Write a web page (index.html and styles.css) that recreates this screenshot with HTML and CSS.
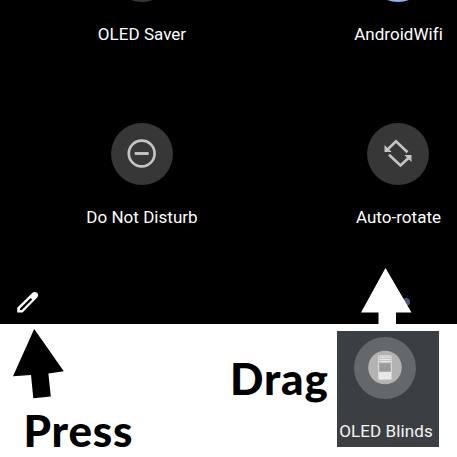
FILE: index.html
```html
<!DOCTYPE html>
<html lang="en">
<head>
<meta charset="utf-8">
<title>Quick settings guide</title>
<link rel="stylesheet" href="styles.css">
</head>
<body>
<main class="page">
  <section class="panel">
    <div class="tiles">
      <div class="tile"><span class="disc"></span><span class="label">OLED Saver</span></div>
      <div class="tile"><span class="disc on"></span><span class="label">AndroidWifi</span></div>
      <div class="tile">
        <span class="disc">
          <svg width="62" height="62" viewBox="0 0 62 62" fill="none" stroke="#c4c4c4"><circle cx="30.7" cy="30.5" r="12.9" stroke-width="2.7"/><path d="M23.7 30.5h14" stroke-width="2.9"/></svg>
        </span>
        <span class="label">Do Not Disturb</span>
      </div>
      <div class="tile">
        <span class="disc">
          <svg width="62" height="62" viewBox="0 0 62 62" fill="none" stroke="#c4c4c4" stroke-width="2.6"><path d="M40.5 29.3L29 18.3L20.5 26.5M22 31.7L33.5 42.5L42 34.5"/><path d="M17.5 22v7h7.2zM44.5 39v-7h-7.2z" fill="#c4c4c4" stroke="none"/></svg>
        </span>
        <span class="label">Auto-rotate</span>
      </div>
    </div>
    <svg class="pencil" width="24" height="24" viewBox="0 0 24 24"><path d="M1.2 17.8L16 3.2Q18.2 1 20.6 2.6Q23.4 4.6 21.4 7.2L6.6 22.6H1.2Z" fill="#fff"/><path d="M4 20V18.4L14.6 8L16.2 9.4L5.8 20Z" fill="#000"/></svg>
    <span class="dot"></span>
    <svg class="drag-arrow" width="52" height="58" viewBox="0 0 52 58"><path d="M25.5 0L51.5 44.5H36V58H18.5V44.5H1Z" fill="#fff"/></svg>
  </section>
  <section class="guide">
    <div class="press">
      <svg width="52" height="70" viewBox="0 0 52 70"><path d="M21.2 0L50.8 42.2L35.4 44.4L37.8 67.4L20.3 69.3L18 46.1L0 47.3Z"/></svg>
      <span class="word press-word">Press</span>
    </div>
    <span class="word drag-word">Drag</span>
    <div class="card">
      <svg width="62" height="62" viewBox="0 0 62 62"><circle cx="31" cy="31" r="31" fill="#65686a"/><circle cx="31" cy="30.5" r="16.8" fill="#b3b3b3"/><rect x="24.4" y="18.6" width="13" height="24" rx="1" fill="#b8b8b8" stroke="#ddd" stroke-width=".9"/><path d="M25.5 20.2h11M25.5 22.5h11M25.5 24.7h11" stroke="#e8e8e8" stroke-width="1.3"/><path d="M25.5 26.5h11v7.8h-11z" fill="#999"/><path d="M31 28.2v2" stroke="#bbb" stroke-width=".7"/><path d="M25 35h12v7H25z" fill="#e7e7e7"/></svg>
      <span class="label">OLED Blinds</span>
    </div>
  </section>
</main>
</body>
</html>
```

FILE: styles.css
```css
body { margin: 0; background: #fff; }
.page { width: 457px; height: 457px; overflow: hidden; }
.panel { position: relative; height: 324px; overflow: hidden; background: #000; }
.tiles { display: grid; grid-template-columns: 284px 229px; grid-auto-rows: 183px; margin-top: -60px; }
.tile { display: flex; flex-direction: column; align-items: center; }
.disc { width: 62px; height: 62px; border-radius: 50%; background: #373737; }
.tile:nth-child(even) .disc { margin-right: 1px; }
.disc svg { display: block; }
.tile .on { background: #8ab4f8; }
.label { margin-top: 22px; font: 17px/20px Roboto, sans-serif; letter-spacing: .03px; color: #fff; white-space: nowrap; }
.pencil { position: absolute; left: 16px; top: 290px; }
.dot { position: absolute; left: 402px; top: 298px; width: 8px; height: 8px; border-radius: 50%; background: #425779; }
.drag-arrow { position: absolute; left: 360px; top: 268px; }
.guide { display: flex; height: 133px; }
.press { width: 230px; padding: 5px 0 0 13px; box-sizing: border-box; display: flex; flex-direction: column; flex: none; }
.word { font: 900 44px/50px Lato, sans-serif; letter-spacing: .8px; color: #000; white-space: nowrap; }
.press-word { margin: 6px 0 0 10.5px; }
.drag-word { width: 107px; margin: 29px 0 0; flex: none; }
.card { width: 102px; height: 116px; margin-top: 7px; background: #3b3f42; display: flex; flex-direction: column; align-items: center; flex: none; overflow: hidden; }
.card svg { margin: 6px 6px 0 0; display: block; flex: none; }
.card .label { margin: 22px 4px 0 0; letter-spacing: .1px; color: #f4f4f4; }
```
